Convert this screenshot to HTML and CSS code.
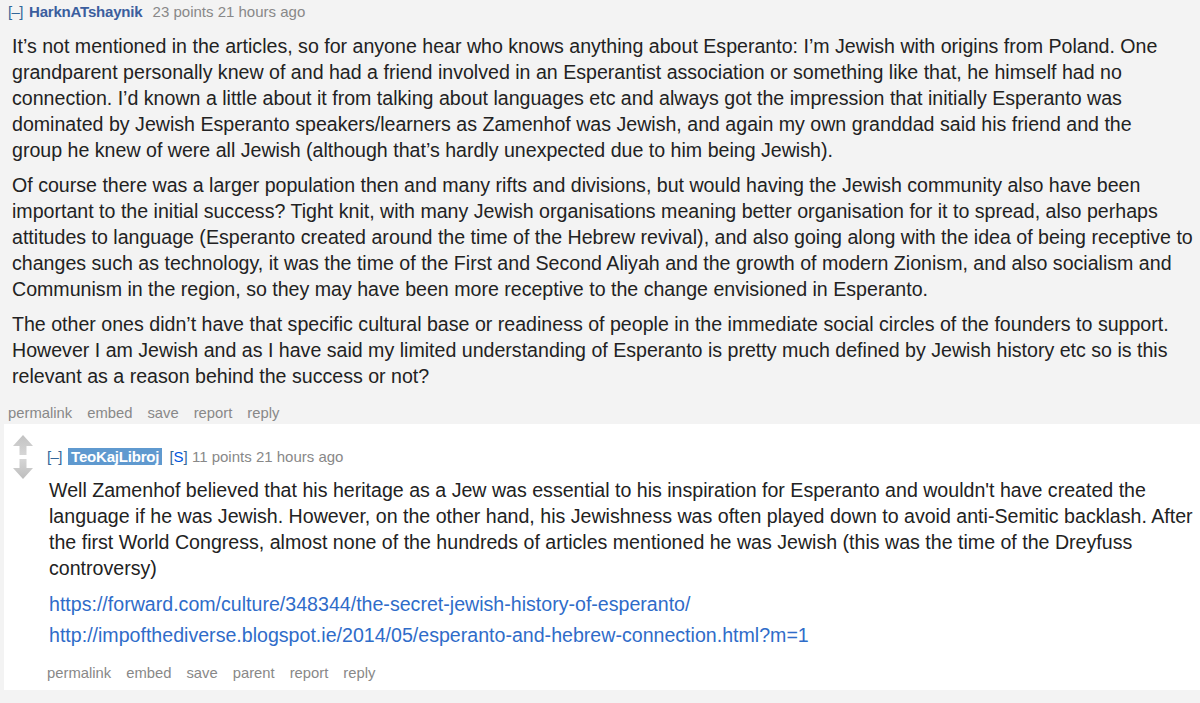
FILE: index.html
```html
<!DOCTYPE html>
<html>
<head>
<meta charset="utf-8">
<link rel="stylesheet" href="styles.css">
</head>
<body>
<div class="comment">
  <div class="tagline">
    <span class="expand">[–]</span>
    <span class="author">HarknATshaynik</span>
    <span class="score">23 points</span>
    <span class="time">21 hours ago</span>
  </div>
  <div class="md">
    <p>It’s not mentioned in the articles, so for anyone hear who knows anything about Esperanto: I’m Jewish with origins from Poland. One grandparent personally knew of and had a friend involved in an Esperantist association or something like that, he himself had no connection. I’d known a little about it from talking about languages etc and always got the impression that initially Esperanto was dominated by Jewish Esperanto speakers/learners as Zamenhof was Jewish, and again my own granddad said his friend and the<br>group he knew of were all Jewish (although that’s hardly unexpected due to him being Jewish).</p>
    <p>Of course there was a larger population then and many rifts and divisions, but would having the Jewish community also have been important to the initial success? Tight knit, with many Jewish organisations meaning better organisation for it to spread, also perhaps attitudes to language (Esperanto created around the time of the Hebrew revival), and also going along with the idea of being receptive to changes such as technology, it was the time of the First and Second Aliyah and the growth of modern Zionism, and also socialism and Communism in the region, so they may have been more receptive to the change envisioned in Esperanto.</p>
    <p>The other ones didn’t have that specific cultural base or readiness of people in the immediate social circles of the founders to support. However I am Jewish and as I have said my limited understanding of Esperanto is pretty much defined by Jewish history etc so is this relevant as a reason behind the success or not?</p>
  </div>
  <ul class="buttons">
    <li>permalink</li><li>embed</li><li>save</li><li>report</li><li>reply</li>
  </ul>
</div>
<div class="child">
  <div class="votes">
    <svg class="arrow" width="22" height="22" viewBox="0 0 22 22"><defs><linearGradient id="gu" x1="0" y1="0" x2="0" y2="1"><stop offset="0" stop-color="#c2c2c2"/><stop offset="1" stop-color="#d6d6d6"/></linearGradient></defs><path d="M11 1 L21 12 L14.5 12 L14.5 21 L7.5 21 L7.5 12 L1 12 Z" fill="url(#gu)"/></svg>
    <svg class="arrow" width="22" height="22" viewBox="0 0 22 22"><defs><linearGradient id="gd" x1="0" y1="0" x2="0" y2="1"><stop offset="0" stop-color="#d6d6d6"/><stop offset="1" stop-color="#bdbdbd"/></linearGradient></defs><path d="M7.5 1 L14.5 1 L14.5 10 L21 10 L11 21 L1 10 L7.5 10 Z" fill="url(#gd)"/></svg>
  </div>
  <div class="entry">
    <div class="tagline">
      <span class="expand">[–]</span>
      <span class="author submitter">TeoKajLibroj</span>
      <span class="flair">[<span class="s">S</span>]</span>
      <span class="score">11 points</span>
      <span class="time">21 hours ago</span>
    </div>
    <div class="md">
      <p class="first">Well Zamenhof believed that his heritage as a Jew was essential to his inspiration for Esperanto and wouldn't have created the language if he was Jewish. However, on the other hand, his Jewishness was often played down to avoid anti-Semitic backlash. After the first World Congress, almost none of the hundreds of articles mentioned he was Jewish (this was the time of the Dreyfuss controversy)</p>
      <p><a href="#">https://forward.com/culture/348344/the-secret-jewish-history-of-esperanto/</a></p>
      <p><a href="#">http://impofthediverse.blogspot.ie/2014/05/esperanto-and-hebrew-connection.html?m=1</a></p>
    </div>
    <ul class="buttons">
      <li>permalink</li><li>embed</li><li>save</li><li>parent</li><li>report</li><li>reply</li>
    </ul>
  </div>
</div>
</body>
</html>
```
FILE: styles.css
```css
html, body {
  margin: 0;
  padding: 0;
}
body {
  background: #f3f3f3;
  font-family: "Liberation Sans", Arial, Helvetica, sans-serif;
  color: #222;
  width: 1200px;
  height: 703px;
  overflow: hidden;
}
.comment {
  padding: 2px 2px 0 8px;
}
.tagline {
  font-size: 15px;
  line-height: 20px;
  color: #888;
}
.tagline .expand {
  color: #369;
  letter-spacing: -0.6px;
  margin-right: 2px;
}
.tagline .author {
  color: #3b5e9e;
  font-weight: bold;
  letter-spacing: -0.2px;
  margin-right: 6px;
}
.tagline .submitter {
  background: #5f99cf;
  color: #fff;
  padding: 0 3px;
  margin-left: 0;
  margin-right: 3px;
}
.tagline .flair {
  color: #369;
}
.tagline .s {
  color: #0055df;
}
.md {
  font-size: 19.6px;
  line-height: 26px;
  padding-left: 4px;
  margin-top: 11px;
}
.md p {
  margin: 0 0 9px 0;
}
.md p:last-child {
  margin-bottom: 0;
}
.md a {
  color: #2f6cc9;
  text-decoration: none;
}
.buttons {
  list-style: none;
  margin: 14px 0 0 0;
  padding: 0;
  display: flex;
  gap: 15px;
  font-size: 14.8px;
  line-height: 20px;
  color: #888;
}
.child {
  margin: 1px 0 0 4px;
  background: #fff;
  display: flex;
  padding: 9px 0 7px 8px;
}
.votes {
  display: flex;
  flex-direction: column;
  gap: 2px;
  width: 22px;
  padding-top: 1px;
}
.entry {
  padding-left: 13px;
  padding-top: 14px;
  flex: 1;
}
.entry .tagline .author {
  margin-right: 3px;
}
.entry .md {
  padding-left: 2px;
  margin-top: 10px;
}
.entry .md p {
  margin-bottom: 5px;
}
.entry .md p.first {
  margin-bottom: 10px;
}
.entry .md p:last-child {
  margin-bottom: 0;
}
.entry .buttons {
  margin-top: 15px;
  padding-left: 0;
}
```
